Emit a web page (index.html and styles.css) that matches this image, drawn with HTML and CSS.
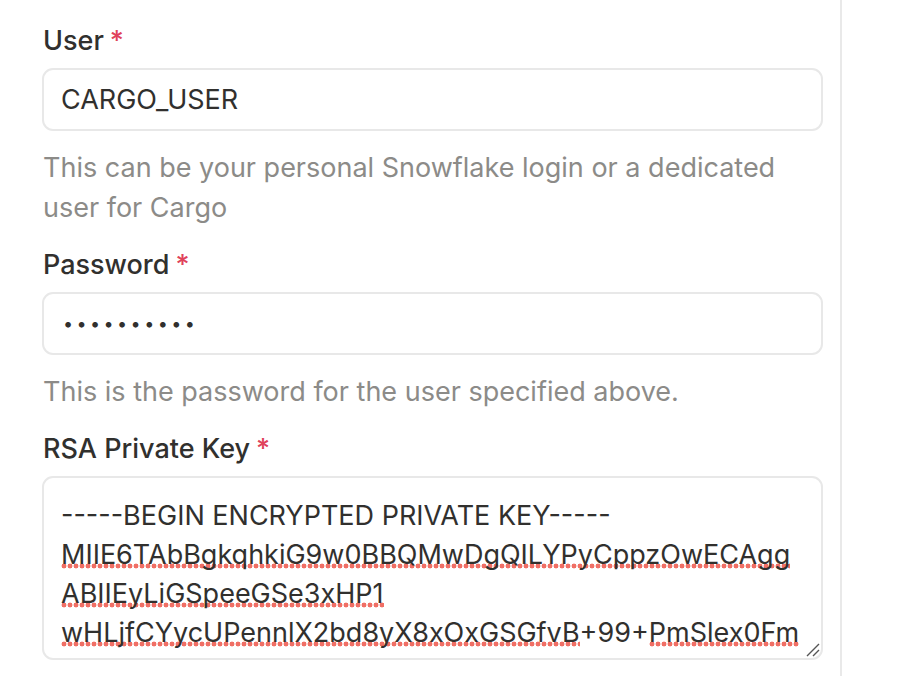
FILE: index.html
```html
<!DOCTYPE html>
<html>
<head>
<meta charset="utf-8">
<link rel="stylesheet" href="styles.css">
</head>
<body>
<div class="page">
  <main class="form">
    <div class="field">
      <label class="label">User<span class="req">*</span></label>
      <div class="input">CARGO_USER</div>
      <p class="help">This can be your personal Snowflake login or a dedicated<br>user for Cargo</p>
    </div>
    <div class="field">
      <label class="label">Password<span class="req">*</span></label>
      <div class="input dots">••••••••••</div>
      <p class="help">This is the password for the user specified above.</p>
    </div>
    <div class="field">
      <label class="label">RSA Private Key<span class="req">*</span></label>
      <div class="textarea">
        <div class="ta-line">-----BEGIN ENCRYPTED PRIVATE KEY-----</div>
        <div class="ta-line"><span class="sp">MIIE6TAbBgkqhkiG9w0BBQMwDgQILYPyCppzOwECAgg</span></div>
        <div class="ta-line"><span class="sp">ABIIEyLiGSpeeGSe3xHP1</span></div>
        <div class="ta-line"><span class="sp">wHLjfCYycUPennlX2bd8yX8xOxGSGfvB</span>+99+<span class="sp">PmSlex0Fm</span></div>
        <svg class="grip" width="16" height="16" viewBox="0 0 16 16"><path d="M15 3 L3 15 M15 9 L9 15" stroke="#555555" stroke-width="1.4" fill="none"/></svg>
      </div>
    </div>
  </main>
  <div class="divider"></div>
</div>
</body>
</html>
```
FILE: styles.css
```css
html, body {
  margin: 0;
  padding: 0;
  background: #ffffff;
}
body {
  font-family: Inter, "Noto Sans", sans-serif;
  color: #2f2f2e;
}
.page {
  display: flex;
  height: 676px;
  overflow: hidden;
}
.form {
  width: 781px;
  margin-left: 42px;
  padding-top: 23px;
}
.divider {
  width: 2px;
  margin-left: 17px;
  background: #e9e9e9;
  height: 100%;
}
.field {
  display: flex;
  flex-direction: column;
}
.label {
  font-size: 27px;
  font-weight: 500;
  line-height: 36px;
  color: #31302e;
  margin-bottom: 9px;
  padding-left: 1px;
}
.req {
  color: #e0425a;
  margin-left: 6px;
}
.input {
  height: 59px;
  border: 2px solid #e8e8e8;
  border-radius: 11px;
  box-sizing: content-box;
  padding: 0 17px;
  font-size: 27px;
  line-height: 59px;
  color: #31302e;
}
.dots {
  letter-spacing: 3.4px;
  font-size: 18px;
  padding-left: 19px;
}
.help {
  margin: 17px 0 19px;
  font-size: 27px;
  line-height: 40px;
  color: #8c8b88;
  padding-left: 1px;
  white-space: nowrap;
}
.textarea {
  position: relative;
  height: 162px;
  border: 2px solid #e8e8e8;
  border-radius: 11px;
  padding: 18px 17px 0;
  overflow: hidden;
  font-size: 27px;
  line-height: 39px;
  color: #31302e;
}
.ta-line {
  white-space: pre;
}
.sp {
  background-image: radial-gradient(circle, #f06f65 2.2px, transparent 2.7px);
  background-size: 6px 6px;
  background-repeat: repeat-x;
  background-position: 0 calc(100% - 2px);
}
.grip {
  position: absolute;
  right: 1px;
  bottom: 1px;
}
```
